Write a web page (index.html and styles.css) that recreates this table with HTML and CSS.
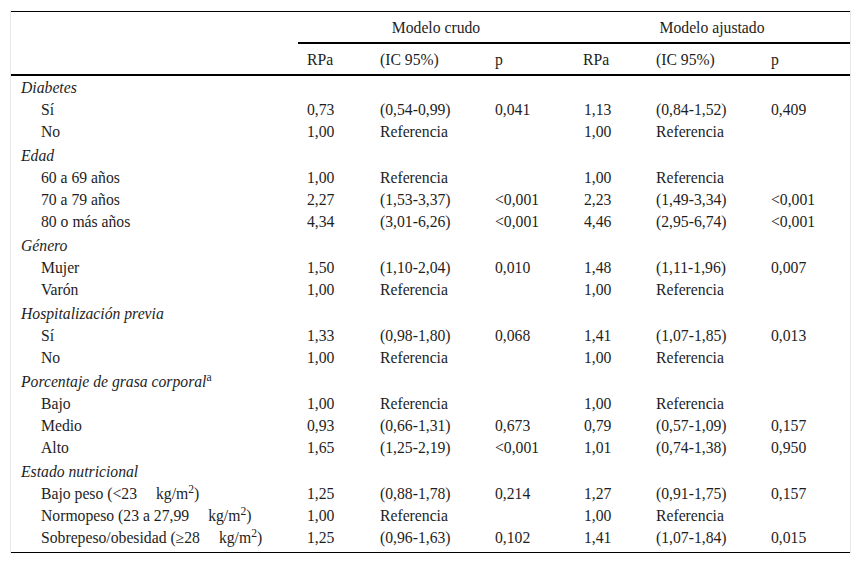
FILE: index.html
```html
<!DOCTYPE html>
<html lang="es">
<head>
<meta charset="utf-8">
<title>Tabla</title>
<link rel="stylesheet" href="styles.css">
</head>
<body>
<div class="wrap">
<table class="t">
<colgroup>
<col class="c-label"><col class="c-rpa"><col class="c-ic"><col class="c-p"><col class="c-rpa"><col class="c-ic"><col class="c-p2">
</colgroup>
<thead>
<tr class="h1">
<th class="blank"></th>
<th colspan="3" class="span">Modelo crudo</th>
<th colspan="3" class="span">Modelo ajustado</th>
</tr>
<tr class="h2">
<th></th>
<th>RPa</th><th>(IC 95%)</th><th>p</th>
<th>RPa</th><th>(IC 95%)</th><th>p</th>
</tr>
</thead>
<tbody>
<tr class="cat first"><td colspan="7">Diabetes</td></tr>
<tr><td class="sub">Sí</td><td>0,73</td><td>(0,54-0,99)</td><td>0,041</td><td>1,13</td><td>(0,84-1,52)</td><td>0,409</td></tr>
<tr><td class="sub">No</td><td>1,00</td><td>Referencia</td><td></td><td>1,00</td><td>Referencia</td><td></td></tr>
<tr class="cat"><td colspan="7">Edad</td></tr>
<tr><td class="sub">60 a 69 años</td><td>1,00</td><td>Referencia</td><td></td><td>1,00</td><td>Referencia</td><td></td></tr>
<tr><td class="sub">70 a 79 años</td><td>2,27</td><td>(1,53-3,37)</td><td>&lt;0,001</td><td>2,23</td><td>(1,49-3,34)</td><td>&lt;0,001</td></tr>
<tr><td class="sub">80 o más años</td><td>4,34</td><td>(3,01-6,26)</td><td>&lt;0,001</td><td>4,46</td><td>(2,95-6,74)</td><td>&lt;0,001</td></tr>
<tr class="cat"><td colspan="7">Género</td></tr>
<tr><td class="sub">Mujer</td><td>1,50</td><td>(1,10-2,04)</td><td>0,010</td><td>1,48</td><td>(1,11-1,96)</td><td>0,007</td></tr>
<tr><td class="sub">Varón</td><td>1,00</td><td>Referencia</td><td></td><td>1,00</td><td>Referencia</td><td></td></tr>
<tr class="cat"><td colspan="7">Hospitalización previa</td></tr>
<tr><td class="sub">Sí</td><td>1,33</td><td>(0,98-1,80)</td><td>0,068</td><td>1,41</td><td>(1,07-1,85)</td><td>0,013</td></tr>
<tr><td class="sub">No</td><td>1,00</td><td>Referencia</td><td></td><td>1,00</td><td>Referencia</td><td></td></tr>
<tr class="cat"><td colspan="7">Porcentaje de grasa corporal<sup>a</sup></td></tr>
<tr><td class="sub">Bajo</td><td>1,00</td><td>Referencia</td><td></td><td>1,00</td><td>Referencia</td><td></td></tr>
<tr><td class="sub">Medio</td><td>0,93</td><td>(0,66-1,31)</td><td>0,673</td><td>0,79</td><td>(0,57-1,09)</td><td>0,157</td></tr>
<tr><td class="sub">Alto</td><td>1,65</td><td>(1,25-2,19)</td><td>&lt;0,001</td><td>1,01</td><td>(0,74-1,38)</td><td>0,950</td></tr>
<tr class="cat"><td colspan="7">Estado nutricional</td></tr>
<tr><td class="sub">Bajo peso (&lt;23<span class="gap"></span>kg/m<sup>2</sup>)</td><td>1,25</td><td>(0,88-1,78)</td><td>0,214</td><td>1,27</td><td>(0,91-1,75)</td><td>0,157</td></tr>
<tr><td class="sub">Normopeso (23 a 27,99<span class="gap"></span>kg/m<sup>2</sup>)</td><td>1,00</td><td>Referencia</td><td></td><td>1,00</td><td>Referencia</td><td></td></tr>
<tr class="last"><td class="sub">Sobrepeso/obesidad (≥28<span class="gap"></span>kg/m<sup>2</sup>)</td><td>1,25</td><td>(0,96-1,63)</td><td>0,102</td><td>1,41</td><td>(1,07-1,84)</td><td>0,015</td></tr>
</tbody>
</table>
</div>
</body>
</html>
```
FILE: styles.css
```css
html, body {
  margin: 0;
  padding: 0;
  background: #fff;
}
.wrap {
  margin: 10px 0 0 10px;
  padding-top: 1px;
  width: 839px;
  border-left: 1px solid #e8e8e8;
  border-right: 1px solid #e8e8e8;
}
.t {
  width: 839px;
  table-layout: fixed;
  border-collapse: separate;
  border-spacing: 0;
  border-top: 1px solid #000;
  border-bottom: 1px solid #000;
  font-family: "Liberation Serif", "Times New Roman", serif;
  font-size: 15.7px;
  color: #1e1e1e;
}
.c-label { width: 287px; }
.c-rpa { width: 73px; }
.c-ic { width: 115px; }
.c-p { width: 88px; }
.c-p2 { width: 88px; }
.t th {
  font-weight: normal;
  text-align: left;
  padding: 2px 0 0 9px;
  height: 28px;
  line-height: 28px;
  border-bottom: 2px solid #000;
  white-space: nowrap;
}
.t .h1 th.span {
  text-align: center;
  padding-left: 0;
}
.t .h1 th.blank {
  border-bottom-color: transparent;
}
.t td {
  padding: 2px 0 0 9px;
  height: 20px;
  line-height: 20px;
  white-space: nowrap;
}
.t td:nth-child(5) {
  padding-left: 10px;
}
.t .cat td {
  font-style: italic;
  padding-left: 10px;
  padding-top: 4px;
}
.t .cat.first td {
  padding-top: 2px;
}
.t td.sub {
  padding-left: 30px;
}
.t .last td {
  padding-bottom: 4px;
}
.t sup {
  font-size: 0.74em;
  font-style: normal;
  line-height: 0;
  vertical-align: 0.5em;
}
.gap {
  display: inline-block;
  width: 19px;
}
```
